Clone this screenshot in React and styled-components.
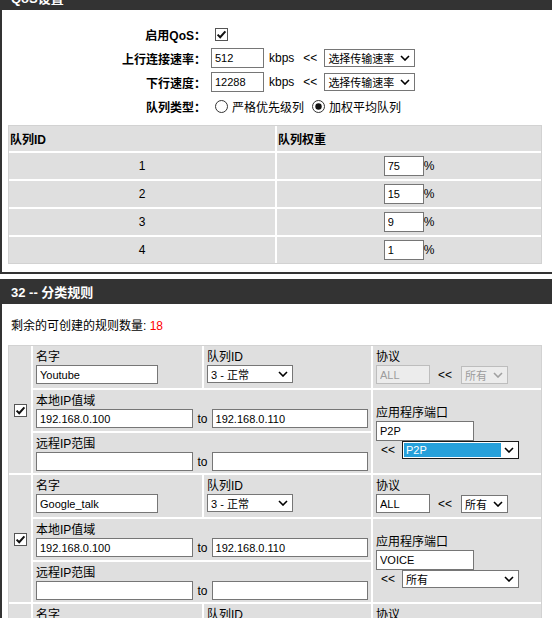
import React from "react";
import styled, { createGlobalStyle } from "styled-components";

const GlobalStyle = createGlobalStyle`
  html, body {
    margin: 0;
    padding: 0;
    overflow: hidden;
    background: #fff;
  }
  body {
    font-family: "Liberation Sans", "Noto Sans CJK SC", sans-serif;
    font-size: 12px;
    color: #000;
  }
`;

const Page = styled.div`
  width: 552px;
`;

const SectionHeader = styled.div`
  height: 25px;
  margin-top: ${(p) => (p.$first ? "-15px" : "5px")};
  background: #333;
  color: #fff;
  font-weight: bold;
  font-size: 13px;
  display: flex;
  align-items: center;
  padding-left: 11px;
`;

const Panel = styled.div`
  border-left: 2px solid #333;
  border-bottom: 2px solid #333;
  padding: ${(p) => p.$pad};
`;

const FormGrid = styled.div`
  display: grid;
  grid-template-columns: 204px 1fr;
  column-gap: 5px;
  grid-auto-rows: 24px;
  align-items: center;
`;

const FieldLabel = styled.div`
  text-align: right;
  font-weight: bold;
  white-space: nowrap;
`;

const Field = styled.div`
  display: flex;
  align-items: center;
`;

const TextInput = styled.input`
  box-sizing: border-box;
  width: ${(p) => p.$w}px;
  height: ${(p) => p.$h || 19}px;
  border: 1px solid ${(p) => (p.disabled ? "#bdbdbd" : "#767676")};
  background: ${(p) => (p.disabled ? "#ececec" : "#fff")};
  color: ${(p) => (p.disabled ? "#9c9c9c" : "#000")};
  font-family: "Liberation Sans", "Noto Sans CJK SC", sans-serif;
  font-size: 11px;
  padding: 0 3px;
  margin: 0;
  outline: none;
  flex: ${(p) => (p.$grow ? "1 1 0" : "none")};
  min-width: 0;
`;

const Unit = styled.span`
  margin-left: ${(p) => p.$ml || 0}px;
  margin-right: ${(p) => p.$mr || 0}px;
  white-space: nowrap;
  display: inline-flex;
  align-items: center;
`;

const SelectBox = styled.div`
  box-sizing: border-box;
  display: inline-flex;
  align-items: stretch;
  width: ${(p) => p.$w}px;
  height: ${(p) => p.$h || 18}px;
  border: 1px solid
    ${(p) => (p.$disabled ? "#bdbdbd" : p.$focus ? "#1a1a1a" : "#767676")};
  background: ${(p) => (p.$disabled ? "#ececec" : "#fff")};
  color: ${(p) => (p.$disabled ? "#9c9c9c" : "#000")};
  font-size: 11px;
  padding: 1px;
  flex: none;
`;

const SelectValue = styled.span`
  flex: 1;
  display: flex;
  align-items: center;
  padding-left: 2px;
  white-space: nowrap;
  overflow: hidden;
  background: ${(p) => (p.$focus ? "#26a0da" : "transparent")};
  color: ${(p) => (p.$focus ? "#fff" : "inherit")};
`;

const Chevron = styled.span`
  display: flex;
  align-items: center;
  justify-content: center;
  width: 16px;
`;

const Select = ({ w, h, value, disabled, focus }) => (
  <SelectBox $w={w} $h={h} $disabled={disabled} $focus={focus}>
    <SelectValue $focus={focus}>{value}</SelectValue>
    <Chevron>
      <svg width="10" height="6" viewBox="0 0 10 6">
        <path
          d="M1 1 L5 5 L9 1"
          fill="none"
          stroke={disabled ? "#a0a0a0" : "#000"}
          strokeWidth="1.6"
        />
      </svg>
    </Chevron>
  </SelectBox>
);

const CheckBox = ({ checked = true }) => (
  <svg width="13" height="13" viewBox="0 0 13 13">
    <rect x="0.5" y="0.5" width="12" height="12" fill="#fff" stroke="#555" />
    {checked && (
      <path
        d="M2.6 6.6 L5.2 9.2 L10.4 3.4"
        fill="none"
        stroke="#111"
        strokeWidth="2"
      />
    )}
  </svg>
);

const Radio = ({ checked }) => (
  <svg width="13" height="13" viewBox="0 0 13 13">
    <circle cx="6.5" cy="6.5" r="6" fill="#fff" stroke="#333" />
    {checked && <circle cx="6.5" cy="6.5" r="3.2" fill="#111" />}
  </svg>
);

const RadioGroup = styled.div`
  display: flex;
  align-items: center;
  gap: 4px;
`;

const RadioText = styled.span`
  margin-right: 4px;
`;

const DataTable = styled.div`
  margin: ${(p) => p.$m};
  width: ${(p) => (p.$w ? `${p.$w}px` : "max-content")};
  box-sizing: border-box;
  border: 1px solid #d2d2d2;
  background: #fff;
  display: grid;
  grid-template-columns: ${(p) => p.$cols || "1fr"};
  gap: 2px;
`;

const HeadCell = styled.div`
  background: #dfdfdf;
  height: 25px;
  display: flex;
  align-items: center;
  padding-left: 1px;
  font-weight: bold;
`;

const WeightCell = styled.div`
  background: #dfdfdf;
  height: 26px;
  display: flex;
  align-items: center;
  justify-content: center;
`;

const Summary = styled.div`
  line-height: 16px;
  padding-left: 9px;
  margin-bottom: 11px;
`;

const Red = styled.span`
  color: #f00;
`;

const RuleBlock = styled.div`
  display: grid;
  grid-template-columns: 22px 169px 167px 168px;
  grid-template-rows: 42px 41px 40px;
  gap: 2px;
`;

const RuleCell = styled.div`
  background: #dfdfdf;
  box-sizing: border-box;
  padding: 3px 3px 2px;
  grid-column: ${(p) => p.$col || "auto"};
  grid-row: ${(p) => p.$row || "auto"};
  display: flex;
  flex-direction: column;
  justify-content: ${(p) => (p.$center ? "center" : "flex-start")};
  align-items: ${(p) => (p.$middle ? "center" : "stretch")};
`;

const CellLabel = styled.div`
  line-height: 16px;
  white-space: nowrap;
`;

const Line = styled.div`
  display: flex;
  align-items: center;
  margin-left: ${(p) => p.$ml || 0}px;
`;

const weights = [
  { id: 1, w: "75" },
  { id: 2, w: "15" },
  { id: 3, w: "9" },
  { id: 4, w: "1" },
];

const rules = [
  {
    name: "Youtube",
    queue: "3 - 正常",
    proto: "ALL",
    protoDisabled: true,
    from: "192.168.0.100",
    to: "192.168.0.110",
    port: "P2P",
    portSel: "P2P",
    focus: true,
  },
  {
    name: "Google_talk",
    queue: "3 - 正常",
    proto: "ALL",
    protoDisabled: false,
    from: "192.168.0.100",
    to: "192.168.0.110",
    port: "VOICE",
    portSel: "所有",
    focus: false,
  },
  {
    name: "",
    queue: "3 - 正常",
    proto: "ALL",
    protoDisabled: false,
    from: "",
    to: "",
    port: "",
    portSel: "所有",
    focus: false,
  },
];

const Rule = ({ r }) => (
  <RuleBlock>
    <RuleCell $col="1" $row="1 / 4" $center $middle>
      <CheckBox />
    </RuleCell>
    <RuleCell>
      <CellLabel>名字</CellLabel>
      <TextInput $w={122} defaultValue={r.name} />
    </RuleCell>
    <RuleCell>
      <CellLabel>队列ID</CellLabel>
      <Select w={86} value={r.queue} />
    </RuleCell>
    <RuleCell>
      <CellLabel>协议</CellLabel>
      <Line>
        <TextInput $w={54} defaultValue={r.proto} disabled={r.protoDisabled} />
        <Unit $ml={8} $mr={9}>&lt;&lt;</Unit>
        <Select w={47} value="所有" disabled={r.protoDisabled} />
      </Line>
    </RuleCell>
    <RuleCell $col="2 / 4" $row="2">
      <CellLabel>本地IP值域</CellLabel>
      <Line>
        <TextInput $grow defaultValue={r.from} />
        <Unit $ml={5} $mr={4}>to</Unit>
        <TextInput $grow defaultValue={r.to} />
      </Line>
    </RuleCell>
    <RuleCell $col="4" $row="2 / 4" $center>
      <CellLabel>应用程序端口</CellLabel>
      <TextInput $w={98} $h={20} defaultValue={r.port} />
      <Line $ml={5}>
        <Unit $mr={7}>&lt;&lt;</Unit>
        <Select w={117} value={r.portSel} focus={r.focus} />
      </Line>
    </RuleCell>
    <RuleCell $col="2 / 4" $row="3">
      <CellLabel>远程IP范围</CellLabel>
      <Line>
        <TextInput $grow defaultValue="" />
        <Unit $ml={5} $mr={4}>to</Unit>
        <TextInput $grow defaultValue="" />
      </Line>
    </RuleCell>
  </RuleBlock>
);

export default function App() {
  return (
    <Page>
      <GlobalStyle />
      <SectionHeader $first>QoS设置</SectionHeader>
      <Panel $pad="12px 0 8px 0">
        <FormGrid>
          <FieldLabel>启用QoS：</FieldLabel>
          <Field>
            <Unit $ml={4}>
              <CheckBox />
            </Unit>
          </Field>
          <FieldLabel>上行连接速率：</FieldLabel>
          <Field>
            <TextInput $w={53} $h={20} defaultValue="512" />
            <Unit $ml={5} $mr={9}>kbps</Unit>
            <Unit $mr={7}>&lt;&lt;</Unit>
            <Select w={91} value="选择传输速率" />
          </Field>
          <FieldLabel>下行速度：</FieldLabel>
          <Field>
            <TextInput $w={53} $h={20} defaultValue="12288" />
            <Unit $ml={5} $mr={9}>kbps</Unit>
            <Unit $mr={7}>&lt;&lt;</Unit>
            <Select w={91} value="选择传输速率" />
          </Field>
          <FieldLabel>队列类型：</FieldLabel>
          <Field>
            <RadioGroup>
              <Unit $ml={4}>
                <Radio />
              </Unit>
              <RadioText>严格优先级列</RadioText>
              <Radio checked />
              <RadioText>加权平均队列</RadioText>
            </RadioGroup>
          </Field>
        </FormGrid>
        <DataTable $m="7px 0 0 6px" $w={534} $cols="266px 1fr">
          <HeadCell>队列ID</HeadCell>
          <HeadCell>队列权重</HeadCell>
          {weights.map((q) => (
            <React.Fragment key={q.id}>
              <WeightCell>{q.id}</WeightCell>
              <WeightCell>
                <TextInput $w={40} $h={20} defaultValue={q.w} />
                <Unit>%</Unit>
              </WeightCell>
            </React.Fragment>
          ))}
        </DataTable>
      </Panel>
      <SectionHeader>32 -- 分类规则</SectionHeader>
      <Panel $pad="14px 0 0 0">
        <Summary>
          剩余的可创建的规则数量: <Red>18</Red>
        </Summary>
        <DataTable $m="0 0 0 6px">
          {rules.map((r, i) => (
            <Rule key={i} r={r} />
          ))}
        </DataTable>
      </Panel>
    </Page>
  );
}
